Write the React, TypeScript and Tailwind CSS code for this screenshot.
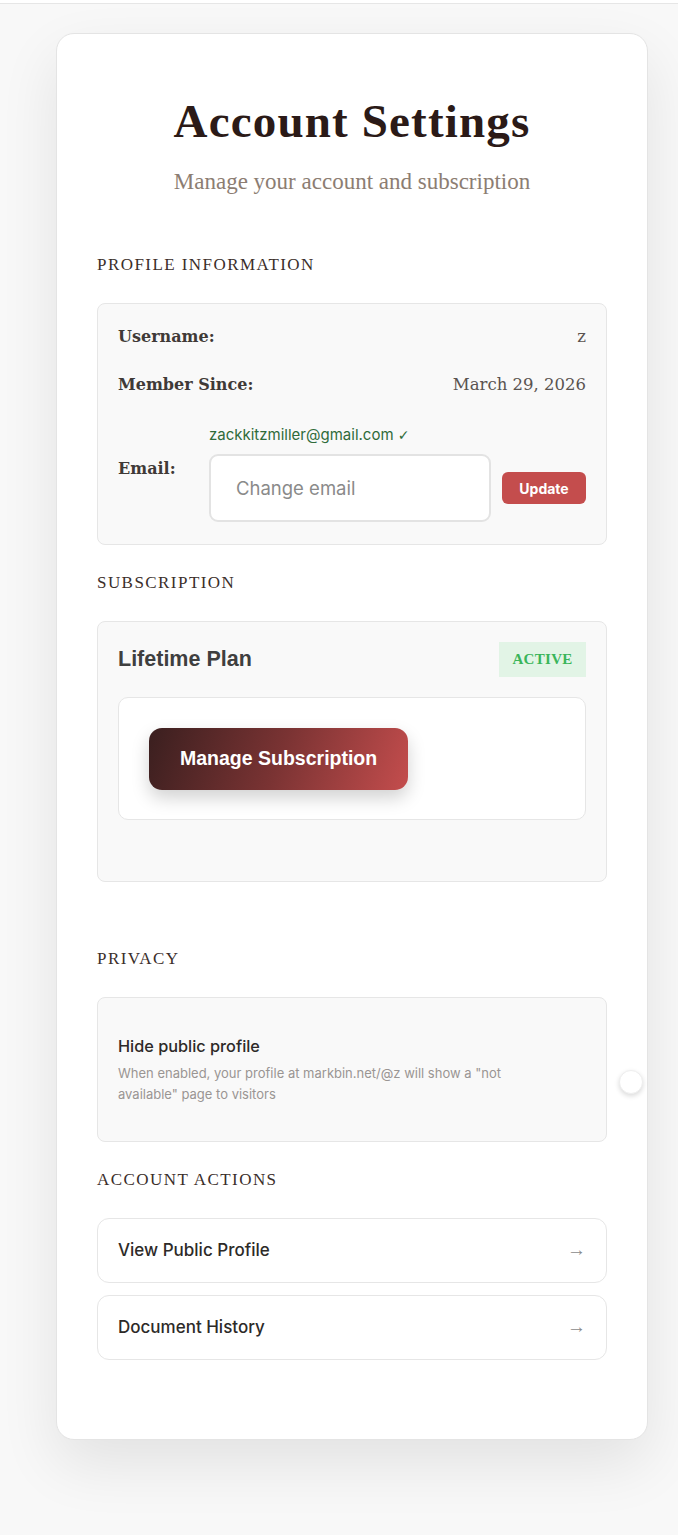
import React, { useState } from 'react';

const serif = { fontFamily: '"DejaVu Serif", serif' };

const SectionLabel: React.FC<{ children: React.ReactNode }> = ({ children }) => (
  <h3 className="mb-[26px] leading-6 tracking-[0.085em] uppercase text-[#3b2e2a] font-['Liberation_Serif',serif] text-[17px]">
    {children}
  </h3>
);

export default function App() {
  const [email, setEmail] = useState('');
  const [hidden, setHidden] = useState(false);

  return (
    <div className="min-h-[1535px] bg-[#f8f8f8] font-['Inter',sans-serif]">
      {/* top strip */}
      <div className="h-[4px] bg-white border-b border-[#e6e6e6]" />

      <div className="pl-[56px] pt-[29px]">
        <div className="w-[592px] bg-white rounded-[18px] border border-[#e4e4e4] shadow-[0_24px_60px_rgba(0,0,0,0.09)] px-[40px] pt-[61px] pb-[79px]">
          {/* Header */}
          <div className="text-center mb-[57px]">
            <h1 className="font-['Liberation_Serif',serif] font-bold text-[47px] leading-[52px] tracking-[0.025em] text-[#2b1a17]">
              Account Settings
            </h1>
            <p className="mt-[21px] font-['Liberation_Serif',serif] text-[23px] leading-7 text-[#8c7d72]">
              Manage your account and subscription
            </p>
          </div>

          {/* Profile */}
          <SectionLabel>Profile Information</SectionLabel>
          <div className="bg-[#f9f9f9] border border-[#e6e6e6] rounded-[8px] px-[20px] pt-[20px] pb-[22px] mb-[26px]">
            <div className="flex items-center justify-between h-[26px]" style={serif}>
              <span className="font-bold text-[16px] text-[#3f3a37]">Username:</span>
              <span className="text-[16.5px] text-[#5a5350]">z</span>
            </div>
            <div className="flex items-center justify-between h-[26px] mt-[22px]" style={serif}>
              <span className="font-bold text-[16px] text-[#3f3a37]">Member Since:</span>
              <span className="text-[16.5px] text-[#5a5350]">March 29, 2026</span>
            </div>
            <div className="flex items-center mt-[26px]">
              <span className="w-[91px] shrink-0 font-bold text-[16px] text-[#3f3a37] -mt-[8px]" style={serif}>
                Email:
              </span>
              <div className="flex-1 min-w-0 flex flex-col">
                <span className="text-[15px] leading-[22px] text-[#2f6b3a] mb-[8px]">
                  zackkitzmiller@gmail.com <span className="font-['DejaVu_Sans',sans-serif] text-[14px]">✓</span>
                </span>
                <div className="flex items-center gap-[11px]">
                  <input
                    value={email}
                    onChange={(e) => setEmail(e.target.value)}
                    placeholder="Change email"
                    className="w-0 flex-1 min-w-0 h-[68px] bg-white border-2 border-[#e3e3e3] rounded-[9px] pl-[25px] text-[18.5px] text-[#333] placeholder:text-[#8a8a8a] focus:outline-none"
                  />
                  <button className="shrink-0 w-[84px] h-[32px] rounded-[6px] bg-[#c44d4d] text-white text-[14px] font-bold">
                    Update
                  </button>
                </div>
              </div>
            </div>
          </div>

          {/* Subscription */}
          <SectionLabel>Subscription</SectionLabel>
          <div className="bg-[#f9f9f9] border border-[#e6e6e6] rounded-[8px] px-[20px] pt-[20px] pb-[61px] mb-[65px]">
            <div className="flex items-center justify-between mb-[20px]">
              <span className="font-['Liberation_Sans',sans-serif] font-bold text-[21.5px] text-[#3f3f3f]">Lifetime Plan</span>
              <span className="h-[35px] w-[87px] flex items-center justify-center bg-[#e2f4e6] text-[#3ab55a] font-['Liberation_Serif',serif] font-bold text-[15px] tracking-[0.02em]">
                ACTIVE
              </span>
            </div>
            <div className="bg-white border border-[#e6e6e6] rounded-[10px] px-[30px] pt-[30px] pb-[29px]">
              <button className="h-[62px] px-[31px] rounded-[13px] bg-[linear-gradient(110deg,#3a1f1f_0%,#7a3333_50%,#c44d4d_100%)] text-white font-['Liberation_Sans',sans-serif] font-bold text-[19.5px] shadow-[0_8px_18px_rgba(0,0,0,0.18)]">
                Manage Subscription
              </button>
            </div>
          </div>

          {/* Privacy */}
          <SectionLabel>Privacy</SectionLabel>
          <div className="relative bg-[#f9f9f9] border border-[#e6e6e6] rounded-[8px] px-[20px] pt-[37px] pb-[36px] mb-[26px]">
            <div className="max-w-[400px]">
              <div className="text-[16.3px] font-medium text-[#2d2a28] leading-[22px]">Hide public profile</div>
              <p className="mt-[6px] text-[13px] leading-[21px] text-[#9a9593]">
                When enabled, your profile at markbin.net/@z will show a "not available" page to visitors
              </p>
            </div>
            <button
              onClick={() => setHidden(!hidden)}
              className="absolute left-[521px] top-[72px] w-[24px] h-[24px] rounded-full bg-white border border-[#eeeeee] shadow-[0_2px_5px_rgba(0,0,0,0.15)]"
              aria-label="toggle"
            />
          </div>

          {/* Actions */}
          <SectionLabel>Account Actions</SectionLabel>
          <div className="flex flex-col gap-[12px]">
            {['View Public Profile', 'Document History'].map((t) => (
              <button
                key={t}
                className="h-[65px] flex items-center justify-between px-[20px] bg-white border border-[#e6e6e6] rounded-[12px] text-left"
              >
                <span className="text-[17px] font-medium text-[#2d2a28]">{t}</span>
                <span className="font-['Liberation_Serif',serif] text-[19px] text-[#8a8a8a]">→</span>
              </button>
            ))}
          </div>
        </div>
      </div>
    </div>
  );
}
